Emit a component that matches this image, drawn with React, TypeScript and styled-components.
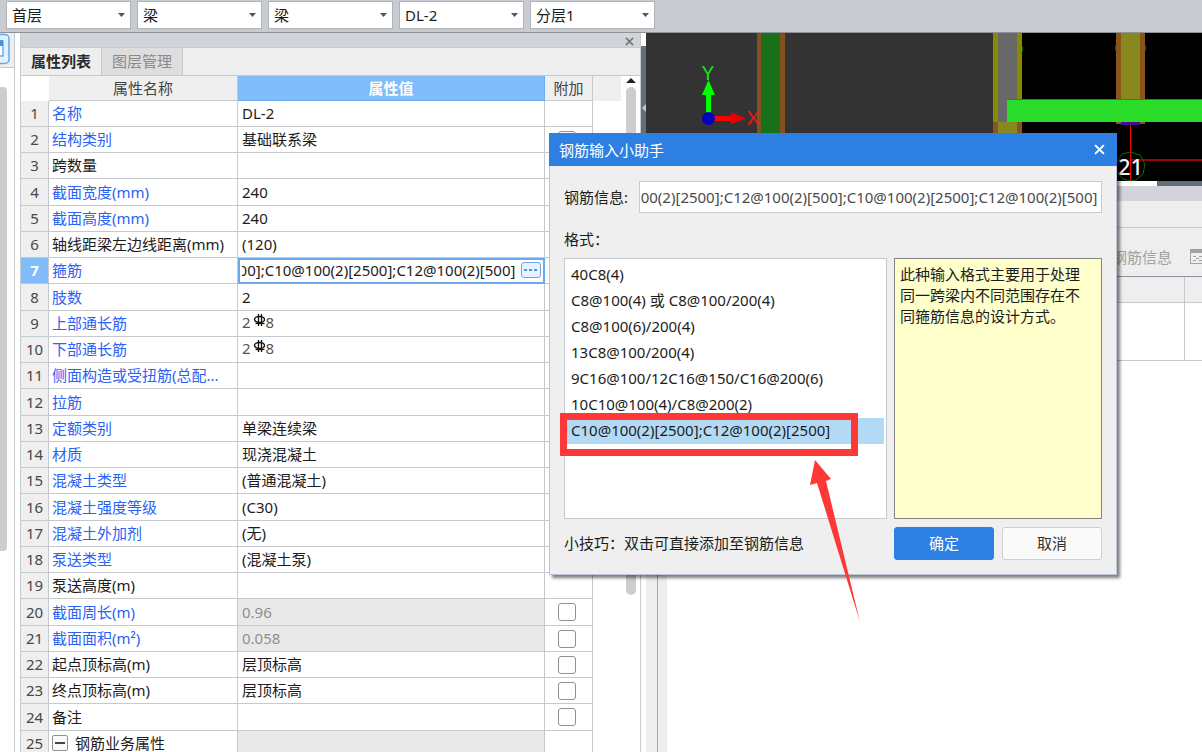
import React, { useLayoutEffect, useRef } from 'react';
import styled, { createGlobalStyle, css } from 'styled-components';

const line = '#c6c9ce';
const blue = '#2d7fe2';
const stirrups =
  'C10@100(2)[2500];C12@100(2)[500];C10@100(2)[2500];C12@100(2)[500]';

const GlobalStyle = createGlobalStyle`
  * { box-sizing: border-box; }
  body {
    margin: 0;
    overflow: hidden;
    background: #fff;
    color: #1c1c1c;
    font-family: 'Noto Sans', 'Noto Sans CJK SC', sans-serif;
    font-size: 15px;
    line-height: 20px;
  }
  button, input, select { font: inherit; color: inherit; }
`;

const Page = styled.div`
  position: relative;
  display: flex;
  flex-direction: column;
  height: 100vh;
  overflow: hidden;
`;

/* ---------- top selectors ---------- */

const Toolbar = styled.div`
  display: flex;
  flex: none;
  gap: 6px;
  height: 33px;
  padding: 1px 6px 0;
  background: #c8cbd0;
  border-bottom: 1px solid #8f9398;
`;

const Picker = styled.label`
  display: grid;
  align-items: center;
  width: 125px;
  height: 28px;
  > * { grid-area: 1 / 1; }
  svg { justify-self: end; margin-right: 6px; pointer-events: none; }
`;

const Select = styled.select`
  appearance: none;
  width: 100%;
  height: 28px;
  padding: 0 5px 1px;
  background: #fff;
  border: 1px solid #b0b3b7;
  border-radius: 0;
`;

/* ---------- workspace ---------- */

const Workspace = styled.div`
  display: flex;
  flex: 1;
  min-height: 0;
`;

const Rail = styled.div`
  display: flex;
  flex: none;
  flex-direction: column;
  width: 15px;
  margin-right: 5px;
  border-right: 1px solid ${line};
`;

const RailTop = styled.div`
  height: 35px;
  background: #efefef;
  border-bottom: 1px solid ${line};
`;

const RailThumb = styled.div`
  width: 7px;
  height: 464px;
  margin-top: 19px;
  background: #cdcdcd;
  border-radius: 0 4px 4px 0;
`;

const Panel = styled.section`
  display: flex;
  flex: 0 0 621px;
  flex-direction: column;
  min-height: 0;
  border: solid ${line};
  border-width: 0 1px;
`;

const PanelBar = styled.div`
  display: flex;
  flex: none;
  align-items: center;
  justify-content: flex-end;
  height: 15px;
  padding: 2px 6px 0 0;
  background: #d2d4d9;
  border-bottom: 1px solid ${line};
`;

const IconButton = styled.button`
  display: grid;
  place-items: center;
  padding: 0;
  background: none;
  border: 0;
`;

const Tabs = styled.div`
  display: flex;
  flex: none;
  height: 28px;
  background: #eee;
  border-bottom: 1px solid ${line};
`;

const Tab = styled.button<{ $active?: boolean }>`
  width: 81px;
  padding: 0 0 2px;
  border: 0;
  border-right: 1px solid ${line};
  background: ${p => (p.$active ? '#eee' : '#dedede')};
  color: ${p => (p.$active ? '#2b2b2b' : '#8a8a8a')};
  font-weight: ${p => (p.$active ? 600 : 400)};
`;

const Scroller = styled.div`
  display: flex;
  flex: 1;
  min-height: 0;
  overflow: hidden;
`;

const Table = styled.table`
  flex: 1;
  align-self: flex-start;
  table-layout: fixed;
  border-spacing: 0;
  th, td { padding: 0 3px 1px; white-space: nowrap; }
  td + td { padding-left: 4px; }
  tbody tr { height: 26px; }
  tbody tr:nth-child(4n) { height: 27px; }
`;

const HeadCell = styled.th<{ $on?: boolean; $blank?: boolean }>`
  height: 25px;
  font-weight: ${p => (p.$on ? 700 : 400)};
  color: ${p => (p.$on ? '#fff' : '#444')};
  background: ${p => (p.$on ? '#80bbfa' : p.$blank ? '#fff' : '#efefef')};
  border: solid ${p => (p.$on ? '#6cabee' : line)};
  border-width: 0 1px 1px 0;
  &:first-child { border: 0; }
  &:last-child { border: 0; }
`;

const NumberCell = styled.th<{ $on?: boolean }>`
  text-align: center;
  font-weight: ${p => (p.$on ? 700 : 400)};
  color: ${p => (p.$on ? '#fff' : '#484848')};
  background: ${p => (p.$on ? '#80bbfa' : '#efefef')};
  border: solid ${line};
  border-width: 0 1px 1px 0;
`;

const Cell = styled.td<{ $blue?: boolean; $off?: boolean; $edit?: boolean }>`
  overflow: hidden;
  color: ${p => (p.$off ? '#8f8f8f' : p.$blue ? '#2a62f5' : '#1c1c1c')};
  background: ${p => (p.$off ? '#e9e9e9' : '#fff')};
  border: solid ${line};
  border-width: 0 1px 1px 0;
  text-overflow: ellipsis;
  ${p => p.$edit && css`
    outline: 2px solid #6aa9ee;
    outline-offset: -2px;
  `}
`;

const CheckCell = styled(Cell)`
  && { padding: 0 16px 0 13px; }
`;

const Check = styled.input`
  appearance: none;
  display: block;
  width: 18px;
  height: 18px;
  margin: 0;
  background: #fff;
  border: 1px solid #929292;
  border-radius: 3px;
`;

const Editor = styled.div`
  display: flex;
  align-items: center;
  gap: 6px;
  input {
    flex: 1;
    min-width: 0;
    height: 20px;
    padding: 0;
    border: 0;
    outline: 0;
    background: none;
  }
`;

const MoreButton = styled.button`
  display: grid;
  place-items: center;
  width: 20px;
  height: 16px;
  padding: 0;
  background: #e6f2ff;
  border: 1px solid #67a9ec;
  border-radius: 3px;
`;

const Rebar = styled.span`
  display: flex;
  gap: 1px;
  margin-bottom: 2px;
  color: #555;
`;

const Group = styled.span`
  display: flex;
  align-items: center;
  gap: 7px;
  color: #1c1c1c;
  button {
    display: grid;
    place-items: center;
    width: 16px;
    height: 16px;
    padding: 0;
    background: #fafafa;
    border: 1px solid #929292;
    border-radius: 2px;
  }
`;

const Scrollbar = styled.div`
  display: flex;
  flex: none;
  flex-direction: column;
  align-items: center;
  gap: 4px;
  width: 19px;
  padding-top: 2px;
`;

const Thumb = styled.div`
  width: 10px;
  height: 508px;
  background: #cdcdcd;
  border-radius: 5px;
`;

/* ---------- right side ---------- */

const Right = styled.div`
  display: flex;
  flex: 1;
  flex-direction: column;
  min-width: 0;
`;

const ViewRow = styled.div`
  display: flex;
  flex: none;
  height: 148px;
`;

const Grip = styled.div`
  display: flex;
  align-items: center;
  width: 5px;
  margin-top: 13px;
  padding-bottom: 12px;
  background: #626e79;
`;

const View = styled.svg`
  flex: 1;
  height: 148px;
  min-width: 0;
  background: #000;
`;

const Lower = styled.div`
  display: flex;
  flex: 1;
  flex-direction: column;
  margin-left: 5px;
`;

const LowerGrip = styled.div`
  height: 5px;
  margin-left: 511px;
  background: #626e79;
`;

const LowerBar = styled.div`
  height: 15px;
  background: #d2d4d9;
`;

const LowerTabs = styled.div`
  height: 27px;
  background: #eee;
  border-bottom: 1px solid ${line};
`;

const LowerTools = styled.div`
  display: flex;
  align-items: center;
  justify-content: flex-end;
  gap: 18px;
  height: 49px;
  padding-top: 9px;
  color: #a2a2a2;
  background: #eee;
  border-bottom: 1px solid #8c91a0;
`;

const LowerBody = styled.div`
  display: flex;
  flex: 1;
`;

const Gutter = styled.div`
  width: 12px;
  background: #eee;
  border-right: 1px solid #a5a5ad;
`;

const Sheet = styled.div`
  flex: 1;
  border-left: 9px solid #eee;
`;

const SheetRow = styled.div<{ $head?: boolean }>`
  display: flex;
  height: ${p => (p.$head ? '26px' : '58px')};
  background: ${p => (p.$head ? '#eee' : '#fff')};
  border-bottom: 1px solid ${line};
  &::before {
    content: '';
    flex: 1;
    margin-right: 17px;
    border-right: 1px solid ${line};
  }
`;

/* ---------- dialog ---------- */

const Dialog = styled.div`
  position: absolute;
  left: 549px;
  top: 133px;
  width: 568px;
  background: #efefef;
  border: solid #bcc6d4;
  border-width: 0 1px 1px;
  box-shadow: 3px 3px 3px rgba(0, 0, 0, 0.5);
`;

const DialogTitle = styled.div`
  display: flex;
  align-items: center;
  justify-content: space-between;
  height: 33px;
  margin: 0 -1px;
  padding: 0 12px 0 10px;
  color: #fff;
  background: ${blue};
`;

const DialogBody = styled.div`
  display: grid;
  grid-template-columns: 323px 208px;
  column-gap: 7px;
  padding: 15px 14px 14px;
`;

const Field = styled.label`
  display: flex;
  grid-column: 1 / -1;
  align-items: center;
  justify-content: space-between;
  input {
    width: 463px;
    height: 32px;
    padding: 0 4px 0 1px;
    color: #4a4a4a;
    background: #fff;
    border: 1px solid #c8ccd2;
  }
`;

const Caption = styled.div`
  grid-column: 1 / -1;
  padding: 16px 0 9px;
`;

const List = styled.ul`
  height: 261px;
  margin: 0;
  padding: 3px 2px 0 1px;
  list-style: none;
  background: #fff;
  border: 1px solid #c3c9d1;
`;

const Item = styled.li<{ $on?: boolean }>`
  height: 26px;
  padding: 0 5px;
  line-height: 24px;
  white-space: nowrap;
  background: ${p => (p.$on ? '#b3daf5' : 'none')};
`;

const Hint = styled.div`
  height: 261px;
  padding: 5px 16px 5px 5px;
  line-height: 21px;
  background: #ffffcc;
  border: 1px solid #858585;
`;

const Tip = styled.div`
  padding-top: 14px;
`;

const Actions = styled.div`
  display: grid;
  grid-template-columns: 1fr 1fr;
  gap: 8px;
  padding-top: 8px;
`;

const Button = styled.button<{ $primary?: boolean }>`
  height: 33px;
  padding: 0 0 2px;
  border: 1px solid ${p => (p.$primary ? blue : '#c8cfdd')};
  border-radius: 3px;
  color: ${p => (p.$primary ? '#fff' : '#333')};
  background: ${p => (p.$primary ? blue : '#fafafa')};
`;

/* ---------- callout ---------- */

const CalloutBox = styled.div`
  position: absolute;
  left: 560px;
  top: 413px;
  width: 298px;
  height: 43px;
  border: 7px solid #fc3936;
`;

const CalloutArrow = styled.svg`
  position: absolute;
  left: 809px;
  top: 459px;
`;

/* ---------- pieces ---------- */

function EndInput({ label, id }: { label?: string; id?: string }) {
  const ref = useRef<HTMLInputElement>(null);
  useLayoutEffect(() => {
    const el = ref.current;
    if (el) el.scrollLeft = el.scrollWidth;
  }, []);
  return <input ref={ref} id={id} aria-label={label} defaultValue={stirrups} />;
}

function Cross({ size, color, width }: { size: number; color: string; width: number }) {
  return (
    <svg width={size} height={size} viewBox="0 0 10 10" stroke={color} strokeWidth={width}>
      <path d="M1 1 L9 9 M9 1 L1 9" />
    </svg>
  );
}

function RebarValue() {
  return (
    <Rebar>
      2
      <svg width="13" height="16" viewBox="0 0 13 16" fill="none" stroke="#111">
        <ellipse cx="7.500" cy="7.500" rx="5" ry="3" strokeWidth="1.400" />
        <path d="M6.500 2V14M9.500 2V14" strokeWidth="1.300" />
        <path d="M3.500 11.500H12.500" strokeWidth="1.200" />
      </svg>
      8
    </Rebar>
  );
}

type Row = {
  name: string;
  value?: string;
  blue?: boolean;
  off?: boolean;
  check?: boolean;
  kind?: 'edit' | 'rebar' | 'group';
};

const rows: Row[] = [
  { name: '名称', value: 'DL-2', blue: true },
  { name: '结构类别', value: '基础联系梁', blue: true, check: true },
  { name: '跨数量' },
  { name: '截面宽度(mm)', value: '240', blue: true },
  { name: '截面高度(mm)', value: '240', blue: true },
  { name: '轴线距梁左边线距离(mm)', value: '(120)' },
  { name: '箍筋', blue: true, kind: 'edit' },
  { name: '肢数', value: '2', blue: true },
  { name: '上部通长筋', blue: true, kind: 'rebar' },
  { name: '下部通长筋', blue: true, kind: 'rebar' },
  { name: '侧面构造或受扭筋(总配...', blue: true },
  { name: '拉筋', blue: true },
  { name: '定额类别', value: '单梁连续梁', blue: true },
  { name: '材质', value: '现浇混凝土', blue: true },
  { name: '混凝土类型', value: '(普通混凝土)', blue: true },
  { name: '混凝土强度等级', value: '(C30)', blue: true },
  { name: '混凝土外加剂', value: '(无)', blue: true },
  { name: '泵送类型', value: '(混凝土泵)', blue: true },
  { name: '泵送高度(m)' },
  { name: '截面周长(m)', value: '0.96', blue: true, off: true, check: true },
  { name: '截面面积(m²)', value: '0.058', blue: true, off: true, check: true },
  { name: '起点顶标高(m)', value: '层顶标高', check: true },
  { name: '终点顶标高(m)', value: '层顶标高', check: true },
  { name: '备注', check: true },
  { name: '钢筋业务属性', off: true, kind: 'group' },
];

const formats = [
  '40C8(4)',
  'C8@100(4) 或 C8@100/200(4)',
  'C8@100(6)/200(4)',
  '13C8@100/200(4)',
  '9C16@100/12C16@150/C16@200(6)',
  '10C10@100(4)/C8@200(2)',
  'C10@100(2)[2500];C12@100(2)[2500]',
];

const pickers = [
  ['楼层', '首层'],
  ['类别', '梁'],
  ['构件类型', '梁'],
  ['构件', 'DL-2'],
  ['分层', '分层1'],
];

function PropertyPanel() {
  return (
    <Panel>
      <PanelBar>
        <IconButton aria-label="关闭面板"><Cross size={9} color="#777" width={1.8} /></IconButton>
      </PanelBar>
      <Tabs>
        <Tab $active>属性列表</Tab>
        <Tab>图层管理</Tab>
      </Tabs>
      <Scroller>
        <Table>
          <colgroup>
            <col style={{ width: 28 }} />
            <col style={{ width: 189 }} />
            <col style={{ width: 307 }} />
            <col style={{ width: 48 }} />
            <col />
          </colgroup>
          <thead>
            <tr>
              <HeadCell $blank />
              <HeadCell>属性名称</HeadCell>
              <HeadCell $on>属性值</HeadCell>
              <HeadCell>附加</HeadCell>
              <HeadCell />
            </tr>
          </thead>
          <tbody>
            {rows.map((r, i) => (
              <tr key={i}>
                <NumberCell $on={r.kind === 'edit'}>{i + 1}</NumberCell>
                <Cell $blue={r.blue}>
                  {r.kind === 'group' ? (
                    <Group>
                      <button aria-label="折叠">
                        <svg width="10" height="2"><rect width="10" height="2" fill="#444" /></svg>
                      </button>
                      {r.name}
                    </Group>
                  ) : r.name}
                </Cell>
                <Cell $off={r.off} $edit={r.kind === 'edit'}>
                  {r.kind === 'edit' && (
                    <Editor>
                      <EndInput label="箍筋" />
                      <MoreButton aria-label="更多">
                        <svg width="14" height="3" fill="#4f97e3">
                          <rect x="0" width="3" height="2" />
                          <rect x="5" width="3" height="2" />
                          <rect x="10" width="3" height="2" />
                        </svg>
                      </MoreButton>
                    </Editor>
                  )}
                  {r.kind === 'rebar' && <RebarValue />}
                  {r.value}
                </Cell>
                <CheckCell>
                  {r.check && <Check type="checkbox" aria-label={r.name} />}
                </CheckCell>
                <td />
              </tr>
            ))}
          </tbody>
        </Table>
        <Scrollbar>
          <svg width="10" height="5"><path d="M0 5 L5 0 L10 5Z" fill="#222" /></svg>
          <Thumb />
        </Scrollbar>
      </Scroller>
    </Panel>
  );
}

function ModelView() {
  return (
    <View>
      <rect width="347" height="148" fill="#333" />
      <rect x="111" width="28" height="148" fill="#855020" />
      <rect x="115" width="19" height="148" fill="#19701a" />

      <rect x="347" width="29" height="89" fill="#8a8a00" />
      <rect x="352" width="19" height="89" fill="#686868" />
      <rect x="347" y="89" width="29" height="59" fill="#8a541f" />
      <rect x="352" y="89" width="19" height="59" fill="#88881d" />

      <rect x="470" width="29" height="91" fill="#8a541f" />
      <rect x="475" width="19" height="89" fill="#88881d" />
      <rect x="475" y="89" width="19" height="3" fill="#4a0a92" />
      <g fill="none" stroke="#0b6b0b">
        <path d="M376 13 L377 16 L376 19" />
        <path d="M470 12 L469 15 L470 18" />
        <path d="M499 12 L500 15 L499 18" />
      </g>

      <rect x="361" y="66" width="100%" height="23" fill="#2bdd2b" />
      <rect x="361" y="66" width="100%" height="1" fill="#1b921b" />

      <rect x="484" y="126" width="100%" height="2" fill="#960000" />
      <text x="472" y="142" fill="#f2f2f2" fontSize="22" fontWeight="500">21</text>
      <rect x="484" y="92" width="1" height="56" fill="#f00" />
      <path
        d="M484.500 119 L494 122 L499 131 L497 141 L490 147 L484.500 148 L477 146 L471 139 L470.500 129 L476 121Z"
        fill="none"
        stroke="#0a6f0a"
      />

      <rect x="60" y="60" width="5" height="22" fill="#0f0" />
      <path d="M62.500 47 L69 62 H56Z" fill="#0f0" />
      <rect x="66" y="83" width="20" height="5" fill="#f00" />
      <path d="M85 79 L100 85.500 L85 91Z" fill="#e80000" />
      <circle cx="62.500" cy="85.500" r="6.500" fill="#0000bd" />
      <text x="56" y="47" fill="#1be01b" fontSize="19" fontFamily="Lato">Y</text>
      <text x="101" y="92" fill="#e01b1b" fontSize="19" fontFamily="Lato">X</text>
    </View>
  );
}

export default function App() {
  return (
    <Page>
      <GlobalStyle />
      <Toolbar>
        {pickers.map(([label, value]) => (
          <Picker key={label}>
            <Select aria-label={label} defaultValue={value}>
              <option>{value}</option>
            </Select>
            <svg width="7" height="4"><path d="M0 0H7L3.500 4Z" fill="#555" /></svg>
          </Picker>
        ))}
      </Toolbar>

      <Workspace>
        <Rail>
          <RailTop>
            <svg width="14" height="34">
              <rect x="-20" y="1.500" width="29" height="29" rx="4" fill="#e4f2ff" stroke="#62aaf0" strokeWidth="1.500" />
              <rect x="-6" y="8" width="9" height="15" fill="#fff" stroke="#4b9cec" strokeWidth="1.200" />
              <rect x="-6" y="7" width="9" height="6" fill="#3f95ea" />
            </svg>
          </RailTop>
          <RailThumb />
        </Rail>

        <PropertyPanel />

        <Right>
          <ViewRow>
            <Grip>
              <svg width="5" height="8"><path d="M5 0V8L1 4Z" fill="#c4c8cc" /></svg>
            </Grip>
            <ModelView />
          </ViewRow>
          <Lower>
            <LowerGrip />
            <LowerBar />
            <LowerTabs />
            <LowerTools>
              <span>钢筋信息</span>
              <svg width="12" height="16" fill="none" stroke="#a2a2a2">
                <rect x="0.500" y="0.500" width="18" height="14" />
                <rect x="0" y="0" width="18" height="4" fill="#a2a2a2" stroke="none" />
                <path d="M3 7.500H6M3 11.500H6M6 9.500H9M9 7.500H12M9 11.500H12" />
              </svg>
            </LowerTools>
            <LowerBody>
              <Gutter />
              <Sheet>
                <SheetRow $head />
                <SheetRow />
              </Sheet>
            </LowerBody>
          </Lower>
        </Right>
      </Workspace>

      <Dialog role="dialog" aria-label="钢筋输入小助手">
        <DialogTitle>
          钢筋输入小助手
          <IconButton aria-label="关闭"><Cross size={11} color="#fff" width={1.8} /></IconButton>
        </DialogTitle>
        <DialogBody>
          <Field htmlFor="rebar-info">
            钢筋信息:
            <EndInput id="rebar-info" />
          </Field>
          <Caption>格式：</Caption>
          <List>
            {formats.map((f, i) => <Item key={f} $on={i === 6}>{f}</Item>)}
          </List>
          <Hint>此种输入格式主要用于处理同一跨梁内不同范围存在不同箍筋信息的设计方式。</Hint>
          <Tip>小技巧：双击可直接添加至钢筋信息</Tip>
          <Actions>
            <Button $primary>确定</Button>
            <Button>取消</Button>
          </Actions>
        </DialogBody>
      </Dialog>

      <CalloutBox />
      <CalloutArrow width="52" height="164">
        <path d="M6 1 L22 20 L17 22 L51 163 L8 24 L1 26Z" fill="#fc3936" />
      </CalloutArrow>
    </Page>
  );
}
